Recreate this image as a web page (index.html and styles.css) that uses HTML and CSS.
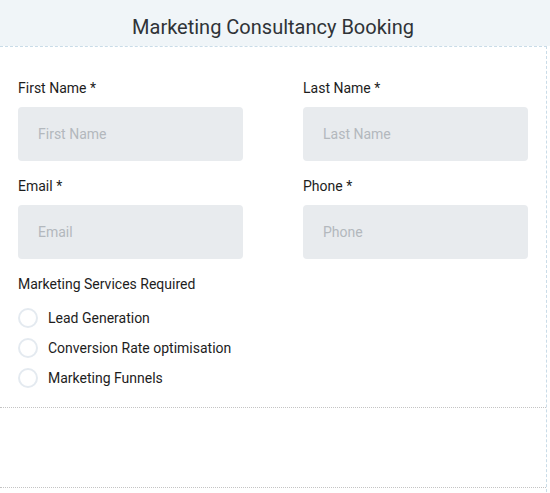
FILE: index.html
```html
<!DOCTYPE html>
<html lang="en">
<head>
    <meta charset="UTF-8">
    <meta name="viewport" content="width=device-width, initial-scale=1.0">
    <title>Marketing Consultancy Booking</title>
    <link rel="stylesheet" href="styles.css">
</head>
<body>
    <div class="form-header">
        <h1>Marketing Consultancy Booking</h1>
    </div>

    <form class="form-card">
        <div class="form-body">
            <div class="field-row">
                <div class="field">
                    <label for="firstName">First Name *</label>
                    <input type="text" id="firstName" placeholder="First Name">
                </div>
                <div class="field">
                    <label for="lastName">Last Name *</label>
                    <input type="text" id="lastName" placeholder="Last Name">
                </div>
            </div>
            <div class="field-row">
                <div class="field">
                    <label for="email">Email *</label>
                    <input type="email" id="email" placeholder="Email">
                </div>
                <div class="field">
                    <label for="phone">Phone *</label>
                    <input type="tel" id="phone" placeholder="Phone">
                </div>
            </div>

            <div class="group-label">Marketing Services Required</div>
            <div class="options">
                <label class="option"><input type="radio" name="service"><span class="dot"></span>Lead Generation</label>
                <label class="option"><input type="radio" name="service"><span class="dot"></span>Conversion Rate optimisation</label>
                <label class="option"><input type="radio" name="service"><span class="dot"></span>Marketing Funnels</label>
            </div>
        </div>
        <div class="form-footer"></div>
    </form>
</body>
</html>
```

FILE: styles.css
```css
body {
    margin: 0;
    font-family: Roboto, 'Liberation Sans', sans-serif;
    background-color: #fff;
    color: #1d1d1d;
    overflow: hidden;
}
.form-header {
    height: 46px;
    background-color: #f0f5f8;
    padding-top: 8px;
    box-sizing: border-box;
    display: flex;
    align-items: center;
    justify-content: center;
}
.form-header h1 {
    margin: 0;
    font-size: 20px;
    font-weight: 400;
    color: #2f3337;
    position: relative;
    left: -2px;
}
.form-card {
    width: 546px;
    border-top: 1px dashed #c9dce8;
    border-right: 1px dashed #c9dce8;
    background: #fff;
    min-height: 460px;
}
.form-body {
    padding: 31px 18px 14px 18px;
    border-bottom: 1px dotted #c4c4c4;
}
.field-row {
    display: grid;
    grid-template-columns: 225px 225px;
    column-gap: 60px;
    margin-bottom: 15px;
}
.field label,
.group-label {
    display: block;
    font-size: 14px;
    line-height: 20px;
    margin-bottom: 9px;
}
.field input {
    display: block;
    width: 100%;
    height: 54px;
    box-sizing: border-box;
    border: none;
    border-radius: 4px;
    background-color: #e8ebee;
    padding: 0 20px;
    font-family: inherit;
    font-size: 14px;
    color: #333;
}
.field input::placeholder {
    color: #b3b8bd;
}
.options {
    display: flex;
    flex-direction: column;
}
.option {
    display: flex;
    align-items: center;
    height: 30px;
    font-size: 14px;
}
.option input {
    display: none;
}
.dot {
    width: 16px;
    height: 16px;
    border: 2px solid #e4eaf0;
    border-radius: 50%;
    margin-right: 10px;
    flex: none;
}
.form-footer {
    height: 79px;
    border-bottom: 1px dotted #c4c4c4;
}
```
